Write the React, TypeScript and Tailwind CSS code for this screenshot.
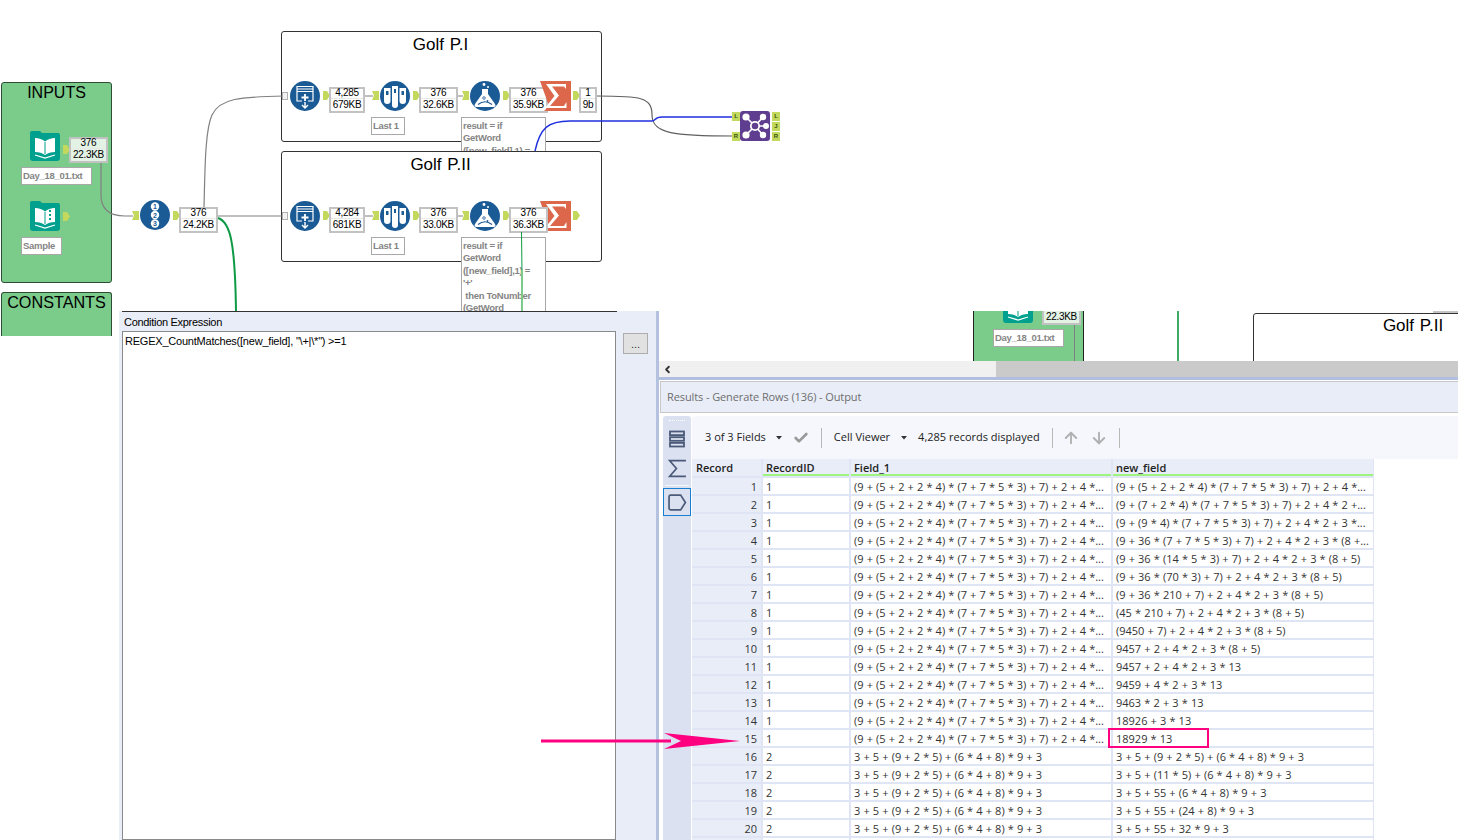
import React from 'react';
import { ArrowDown, ArrowUp, Check, ChevronLeft } from 'lucide-react';

const canvasFont = "font-['Liberation_Sans',Arial,sans-serif]";
const uiFont = "font-['Open_Sans','Noto_Sans',sans-serif]";

const FULL_1 = '(9 + (5 + 2 + 2 * 4) * (7 + 7 * 5 * 3) + 7) + 2 + 4 *...';
const FULL_2 = '3 + 5 + (9 + 2 * 5) + (6 * 4 + 8) * 9 + 3';

const rows = [
  { id: 1, f: FULL_1, n: FULL_1 },
  { id: 1, f: FULL_1, n: '(9 + (7 + 2 * 4) * (7 + 7 * 5 * 3) + 7) + 2 + 4 * 2 +...' },
  { id: 1, f: FULL_1, n: '(9 + (9 * 4) * (7 + 7 * 5 * 3) + 7) + 2 + 4 * 2 + 3 *...' },
  { id: 1, f: FULL_1, n: '(9 + 36 * (7 + 7 * 5 * 3) + 7) + 2 + 4 * 2 + 3 * (8 +...' },
  { id: 1, f: FULL_1, n: '(9 + 36 * (14 * 5 * 3) + 7) + 2 + 4 * 2 + 3 * (8 + 5)' },
  { id: 1, f: FULL_1, n: '(9 + 36 * (70 * 3) + 7) + 2 + 4 * 2 + 3 * (8 + 5)' },
  { id: 1, f: FULL_1, n: '(9 + 36 * 210 + 7) + 2 + 4 * 2 + 3 * (8 + 5)' },
  { id: 1, f: FULL_1, n: '(45 * 210 + 7) + 2 + 4 * 2 + 3 * (8 + 5)' },
  { id: 1, f: FULL_1, n: '(9450 + 7) + 2 + 4 * 2 + 3 * (8 + 5)' },
  { id: 1, f: FULL_1, n: '9457 + 2 + 4 * 2 + 3 * (8 + 5)' },
  { id: 1, f: FULL_1, n: '9457 + 2 + 4 * 2 + 3 * 13' },
  { id: 1, f: FULL_1, n: '9459 + 4 * 2 + 3 * 13' },
  { id: 1, f: FULL_1, n: '9463 * 2 + 3 * 13' },
  { id: 1, f: FULL_1, n: '18926 + 3 * 13' },
  { id: 1, f: FULL_1, n: '18929 * 13' },
  { id: 2, f: FULL_2, n: FULL_2 },
  { id: 2, f: FULL_2, n: '3 + 5 + (11 * 5) + (6 * 4 + 8) * 9 + 3' },
  { id: 2, f: FULL_2, n: '3 + 5 + 55 + (6 * 4 + 8) * 9 + 3' },
  { id: 2, f: FULL_2, n: '3 + 5 + 55 + (24 + 8) * 9 + 3' },
  { id: 2, f: FULL_2, n: '3 + 5 + 55 + 32 * 9 + 3' },
];

const OutAnchor = ({ className }: { className: string }) => (
  <svg viewBox="0 0 7 9" className={`absolute w-[7px] h-[9px] ${className}`}>
    <polygon points="0,0 4,0 7,4.5 4,9 0,9" fill="#c3d95e" />
  </svg>
);

const InAnchor = ({ className }: { className: string }) => (
  <svg viewBox="0 0 7 9" className={`absolute w-[7px] h-[9px] ${className}`}>
    <polygon points="0,0 7,0 7,9 0,9 2,4.5" fill="#c3d95e" />
  </svg>
);

const Stat = ({ className, top, bottom }: { className: string; top: string; bottom: string }) => (
  <div className={`absolute h-[26px] border-2 border-[#c2c2c2] flex flex-col items-center justify-center pb-[3px] text-[10px] text-black tracking-[-0.3px] ${className}`}>
    <span className="w-full text-center leading-[11px] border-b border-[#e8e8e8]">{top}</span>
    <span className="leading-[12px]">{bottom}</span>
  </div>
);

const Note = ({ className, children }: { className: string; children: React.ReactNode }) => (
  <div className={`absolute bg-white border border-[#a8a8a8] pl-[1px] font-bold text-[9.5px] leading-[12.4px] tracking-[-0.3px] text-[#858585] overflow-hidden ${className}`}>
    {children}
  </div>
);

const Book = ({ className, dots }: { className: string; dots?: boolean }) => (
  <svg viewBox="0 0 30 30" className={`absolute w-[30px] h-[30px] ${className}`}>
    <path d="M0 2 Q0 0 2 0 H10 L12 2 H28 Q30 2 30 4 V27 Q30 30 27 30 H3 Q0 30 0 27 Z" fill="#00a08e" />
    <path d="M5 7 Q11 7 15 10.5 Q19 7 25 7 V21 Q19 21 15 24 Q11 21 5 21 Z" fill="#fff" />
    <path d="M15 11 V23" stroke="#00a08e" strokeWidth="1" />
    <path d="M5 24 L15 27 L25 24" stroke="#fff" strokeWidth="1.2" fill="none" />
    {dots && (
      <g fill="#00a08e">
        <rect x="19" y="9" width="2" height="2" />
        <rect x="19" y="13" width="2" height="2" />
        <rect x="19" y="17" width="2" height="2" />
      </g>
    )}
  </svg>
);

const Circle = ({ className, children }: { className: string; children: React.ReactNode }) => (
  <svg viewBox="0 0 30 30" className={`absolute w-[30px] h-[30px] ${className}`}>
    <circle cx="15" cy="15" r="15" fill="#1a5b96" />
    {children}
  </svg>
);

const AppendIcon = () => (
  <g fill="none" stroke="#fff">
    <path d="M7 5.5 H23 M7 8 H23 M7 10.5 H23" strokeWidth="1.2" />
    <path d="M7 5 V20 H12 M23 5 V20 H18" strokeWidth="1.2" />
    <path d="M15 13 V20 M11.5 16.5 H18.5" strokeWidth="1.8" />
    <path d="M15 21 V27 M12 24 L15 27 L18 24" strokeWidth="1.4" />
  </g>
);

const TubesIcon = () => (
  <g>
    <path d="M4 7 H10.5 V20 Q10.5 23 7.25 23 Q4 23 4 20 Z" fill="#fff" />
    <path d="M12 5 H18 V24 Q18 27 15 27 Q12 27 12 24 Z" fill="#fff" />
    <path d="M19.5 7 H26 V20 Q26 23 22.75 23 Q19.5 23 19.5 20 Z" fill="#fff" />
    <path d="M6 10 H8.5 V14 H6 Z M14 8 H16 V12 H14 Z M21.5 10 H24 V14 H21.5 Z" fill="#1a5b96" />
  </g>
);

const FlaskIcon = () => (
  <g>
    <circle cx="14" cy="3.5" r="1.4" fill="#fff" />
    <circle cx="18" cy="6" r="1" fill="#fff" />
    <path d="M12 8 H18 V13 L25 23 Q26.5 26 23.5 26 H6.5 Q3.5 26 5 23 L12 13 Z" fill="#fff" />
    <path d="M8 23.5 Q15 18 22 23.5" stroke="#1a5b96" strokeWidth="1.2" fill="none" />
    <circle cx="14" cy="17" r="1.3" fill="none" stroke="#1a5b96" strokeWidth="0.8" />
    <circle cx="17.5" cy="20" r="0.9" fill="#1a5b96" />
  </g>
);

const SortIcon = () => (
  <g>
    {[
      { y: 6.5, t: '1' },
      { y: 15, t: '2' },
      { y: 23.5, t: '3' },
    ].map((d) => (
      <g key={d.t}>
        <circle cx="15" cy={d.y} r="4.2" fill="#fff" />
        <text x="15" y={d.y + 2.6} textAnchor="middle" fontSize="7" fontWeight="700" fill="#1a5b96" fontFamily="Liberation Sans, sans-serif">
          {d.t}
        </text>
      </g>
    ))}
  </g>
);

const Sigma = ({ className }: { className: string }) => (
  <svg viewBox="0 0 31 30" className={`absolute w-[31px] h-[30px] ${className}`}>
    <path d="M0 0 H31 V30 H4 L9 25 Z" fill="#dc674b" />
    <path d="M6 3 H26 V8 L24 5.5 H12 L19 14.5 L10 25 H24 L26.5 21 V27 H5 L14.5 15 Z" fill="#fff" />
  </svg>
);

const JoinIcon = ({ className }: { className: string }) => (
  <svg viewBox="0 0 30 30" className={`absolute w-[30px] h-[30px] ${className}`}>
    <rect width="30" height="30" rx="3" fill="#5f3d8f" />
    <g stroke="#fff" strokeWidth="1.6">
      <path d="M15 15 L6 6 M15 15 L23 6 M15 15 L6 24 M15 15 L23 24 M15 15 L26 15" />
    </g>
    <circle cx="15" cy="15" r="4.2" fill="#5f3d8f" stroke="#fff" strokeWidth="1.8" />
    <g fill="#fff">
      <circle cx="6" cy="6" r="3.6" />
      <circle cx="23" cy="6" r="3.2" />
      <circle cx="6" cy="24" r="3.6" />
      <circle cx="23" cy="24" r="3.2" />
      <circle cx="26" cy="15" r="3" />
    </g>
  </svg>
);

const JoinPort = ({ className, label }: { className: string; label: string }) => (
  <div className={`absolute w-[8px] h-[9px] bg-[#c3d95e] text-[6px] leading-[9px] font-bold text-center text-[#35520f] ${className}`}>
    {label}
  </div>
);

const MacroIn = ({ className }: { className: string }) => (
  <div className={`absolute w-[6px] h-[8px] border border-[#b0b0b0] bg-[#f2f2f2] ${className}`} />
);

const Container = ({ className, title }: { className: string; title: string }) => (
  <div className={`absolute h-[111px] bg-white border border-[#333] rounded-[3px] text-center text-[17px] leading-[26px] pr-[2px] [word-spacing:1px] ${className}`}>
    {title}
  </div>
);

const Workflow = () => (
  <div className={`relative h-[311px] ${canvasFont}`}>
    <div className="absolute left-[1px] top-[82px] w-[111px] h-[201px] bg-[#7bcb8b] border border-[#2d4d36] rounded-[3px] text-center text-[16px] leading-[19px]">
      INPUTS
    </div>
    <div className="absolute left-[1px] top-[292px] w-[111px] h-[44px] bg-[#7bcb8b] border border-b-0 border-[#2d4d36] rounded-t-[3px] text-center text-[16.2px] leading-[19px]">
      CONSTANTS
    </div>

    <Container className="left-[281px] top-[31px] w-[321px]" title="Golf P.I" />
    <Note className="left-[461px] top-[117px] w-[85px] h-[36px] border-b-0 pt-[2px]">
      result = if
      <br />
      GetWord
      <br />
      ([new_field],1) =
    </Note>
    <Container className="left-[281px] top-[151px] w-[321px]" title="Golf P.II" />

    {/* connections */}
    <svg viewBox="0 0 800 311" className="absolute left-0 top-0 w-[800px] h-[311px]" fill="none">
      <path d="M101 160 V195 Q101 216 125 216 H133" stroke="#808080" strokeWidth="1.2" />
      <path d="M204 207 C205 170 205 130 212 115 C220 98 240 97 284 96" stroke="#808080" strokeWidth="1.2" />
      <path d="M217 216 H284" stroke="#808080" strokeWidth="1.2" />
      <path d="M365 96 H373 M458 96 H463 M365 216 H373 M458 216 H463" stroke="#808080" strokeWidth="1.2" />
      <path d="M597 96 C640 96 652 97 652 115 C652 134 675 136 733 136" stroke="#606060" strokeWidth="1.2" />
      <path d="M535 151 C540 128 548 121 570 121 H652 C656 121 654 117 662 117 H734" stroke="#2030e0" strokeWidth="1.4" />
      <path d="M218 218 C230 222 235 240 236 311" stroke="#0d9a45" strokeWidth="2" />
      <path d="M510 217 C518 216 521 222 521 232" stroke="#9ed8ae" strokeWidth="1" />
    </svg>

    <Book className="left-[30px] top-[131px]" />
    <OutAnchor className="left-[63px] top-[145px]" />
    <Stat className="left-[69px] top-[137px] w-[39px] bg-[#e2f3e6]" top="376" bottom="22.3KB" />
    <Note className="left-[21px] top-[167px] w-[71px] h-[18px] leading-[16px]">Day_18_01.txt</Note>
    <Book className="left-[30px] top-[201px]" dots />
    <OutAnchor className="left-[63px] top-[212px]" />
    <Note className="left-[21px] top-[237px] w-[41px] h-[18px] leading-[16px]">Sample</Note>

    <InAnchor className="left-[132px] top-[211px]" />
    <Circle className="left-[140px] top-[200px]">
      <SortIcon />
    </Circle>
    <OutAnchor className="left-[173px] top-[211px]" />
    <Stat className="left-[179px] top-[207px] w-[39px] bg-white" top="376" bottom="24.2KB" />

    {/* Golf P.I */}
    <MacroIn className="left-[282px] top-[92px]" />
    <Circle className="left-[290px] top-[81px]">
      <AppendIcon />
    </Circle>
    <OutAnchor className="left-[323px] top-[91px]" />
    <Stat className="left-[329px] top-[87px] w-[36px] bg-white" top="4,285" bottom="679KB" />
    <InAnchor className="left-[372px] top-[91px]" />
    <Circle className="left-[380px] top-[81px]">
      <TubesIcon />
    </Circle>
    <OutAnchor className="left-[413px] top-[91px]" />
    <Stat className="left-[419px] top-[87px] w-[39px] bg-white" top="376" bottom="32.6KB" />
    <InAnchor className="left-[462px] top-[91px]" />
    <Circle className="left-[470px] top-[81px]">
      <FlaskIcon />
    </Circle>
    <OutAnchor className="left-[503px] top-[91px]" />
    <Stat className="left-[509px] top-[87px] w-[39px] bg-white" top="376" bottom="35.9KB" />
    <Sigma className="left-[540px] top-[81px]" />
    <OutAnchor className="left-[573px] top-[91px]" />
    <Stat className="left-[579px] top-[87px] w-[18px] bg-white" top="1" bottom="9b" />
    <Note className="left-[371px] top-[117px] w-[34px] h-[18px] leading-[16px]">Last 1</Note>

    {/* Golf P.II */}
    <MacroIn className="left-[282px] top-[212px]" />
    <Circle className="left-[290px] top-[201px]">
      <AppendIcon />
    </Circle>
    <OutAnchor className="left-[323px] top-[211px]" />
    <Stat className="left-[329px] top-[207px] w-[36px] bg-white" top="4,284" bottom="681KB" />
    <InAnchor className="left-[372px] top-[211px]" />
    <Circle className="left-[380px] top-[201px]">
      <TubesIcon />
    </Circle>
    <OutAnchor className="left-[413px] top-[211px]" />
    <Stat className="left-[419px] top-[207px] w-[39px] bg-white" top="376" bottom="33.0KB" />
    <InAnchor className="left-[462px] top-[211px]" />
    <Circle className="left-[470px] top-[201px]">
      <FlaskIcon />
    </Circle>
    <OutAnchor className="left-[503px] top-[211px]" />
    <Sigma className="left-[540px] top-[201px]" />
    <Stat className="left-[509px] top-[207px] w-[39px] bg-white" top="376" bottom="36.3KB" />
    <OutAnchor className="left-[573px] top-[211px]" />
    <Note className="left-[371px] top-[237px] w-[34px] h-[18px] leading-[16px]">Last 1</Note>
    <Note className="left-[461px] top-[237px] w-[85px] h-[74px] border-b-0 pt-[2px]">
      result = if
      <br />
      GetWord
      <br />
      ([new_field],1) =
      <br />
      '+'
      <br />
      &nbsp;then ToNumber
      <br />
      (GetWord
    </Note>
    <svg viewBox="0 0 2 79" className="absolute left-[521px] top-[232px] w-[2px] h-[79px]" fill="none">
      <path d="M0.5 0 L1 40" stroke="#0d9a45" strokeWidth="1" />
      <path d="M1 38 V79" stroke="#7bcb8b" strokeWidth="2" />
    </svg>

    {/* Join */}
    <JoinPort className="left-[732px] top-[112px]" label="L" />
    <JoinPort className="left-[732px] top-[132px]" label="R" />
    <JoinIcon className="left-[740px] top-[111px]" />
    <JoinPort className="left-[772px] top-[112px]" label="L" />
    <JoinPort className="left-[772px] top-[122px]" label="J" />
    <JoinPort className="left-[772px] top-[132px]" label="R" />
  </div>
);

const ConditionPanel = () => (
  <div className={`w-[537px] h-full bg-[#e9edf8] pl-[3px] flex flex-col text-black ${canvasFont}`}>
    <div className="w-[495px] h-[20px] border-t border-[#333] text-[11px] leading-[20px] pl-[2px] tracking-[-0.3px]">
      Condition Expression
    </div>
    <div className="flex flex-1 min-h-0">
      <div className="w-[494px] h-full bg-white border border-[#8a8a8a] pl-[2px] text-[11px] leading-[18px] tracking-[-0.22px]">
        {'REGEX_CountMatches([new_field], "\\+|\\*") >=1'}
      </div>
      <div className="ml-[7px] mt-[2px] w-[25px] h-[21px] bg-[#e1e1e1] border border-[#adadad] text-center text-[11px] leading-[20px] text-[#333]">
        ...
      </div>
    </div>
  </div>
);

const MiniCanvas = () => (
  <div className={`relative h-[50px] overflow-hidden ${canvasFont}`}>
    <div className="absolute left-[314px] top-[-20px] w-[111px] h-[100px] bg-[#7bcb8b] border-x border-[#222]" />
    <Book className="left-[344px] top-[-18px]" />
    <Stat className="left-[383px] top-[-12px] w-[39px] bg-[#e2f3e6]" top="376" bottom="22.3KB" />
    <Note className="left-[334px] top-[18px] w-[71px] h-[18px] leading-[16px]">Day_18_01.txt</Note>
    <div className="absolute left-[415px] top-[14px] w-px h-[36px] bg-[#808080]" />
    <div className="absolute left-[518px] top-0 w-[2px] h-[50px] bg-[#3eaa66]" />
    <div className="absolute left-[774px] top-0 w-[25px] h-[2px] bg-[#c4c4c4]" />
    <div className="absolute left-[594px] top-[2px] w-[210px] h-[60px] bg-white border border-[#333] rounded-t-[3px] text-center text-[17px] leading-[24px] [word-spacing:1px] pl-[110px]">
      Golf P.II
    </div>
  </div>
);

const RailIcons = () => (
  <div className="w-[28px] h-full bg-[#dbe1f0] rounded-t-[3px] flex flex-col items-center">
    <div className="mt-[4px] w-[16px] border-t border-dotted border-white" />
    <svg viewBox="0 0 18 18" className="mt-[9px] w-[18px] h-[18px]" fill="none" stroke="#4a5a78" strokeWidth="1.8">
      <rect x="2" y="1.5" width="14" height="3.6" />
      <rect x="2" y="7.2" width="14" height="3.6" />
      <rect x="2" y="12.9" width="14" height="3.6" />
    </svg>
    <svg viewBox="0 0 18 18" className="mt-[11px] w-[19px] h-[19px]" fill="none" stroke="#4a5a78" strokeWidth="1.6">
      <path d="M17 1.5 H1.5 L8 9 L1.5 16.5 H17" />
    </svg>
    <div className="mt-[7px] w-[24px] border-t border-[#f5f7fc]" />
    <div className="mt-[2px] w-[28px] h-[28px] border border-[#1a7fd0] flex items-center justify-center">
      <svg viewBox="0 0 18 18" className="w-[19px] h-[19px]" fill="none" stroke="#4a5a78" strokeWidth="1.6">
        <path d="M2.5 2 H12 L16.5 9 L12 16 H2.5 Q1 16 1 14.5 V3.5 Q1 2 2.5 2 Z" />
      </svg>
    </div>
  </div>
);

const Caret = ({ className }: { className: string }) => (
  <svg viewBox="0 0 6 4" className={`w-[6px] h-[4px] ${className}`}>
    <polygon points="0,0 6,0 3,3.5" fill="#333" />
  </svg>
);

const Toolbar = () => (
  <div className="h-[43px] bg-[#f5f7fc] rounded-tl-[4px] flex items-center text-[11px] text-[#222]">
    <span className="ml-[13px]">3 of 3 Fields</span>
    <Caret className="ml-[10px]" />
    <Check className="ml-[11px] w-[16px] h-[16px] text-[#999]" strokeWidth={4} />
    <div className="ml-[12px] w-px h-[20px] bg-[#b8b8b8]" />
    <span className="ml-[12px]">Cell Viewer</span>
    <Caret className="ml-[11px]" />
    <span className="ml-[11px]">4,285 records displayed</span>
    <div className="ml-[12px] w-px h-[20px] bg-[#b8b8b8]" />
    <ArrowUp className="ml-[9px] w-[18px] h-[18px] text-[#b0b0b0]" strokeWidth={2.5} />
    <ArrowDown className="ml-[10px] w-[18px] h-[18px] text-[#b0b0b0]" strokeWidth={2.5} />
    <div className="ml-[11px] w-px h-[20px] bg-[#b8b8b8]" />
  </div>
);

const headCell = 'bg-[#e9edf8] h-[17px] leading-[17px] pl-[3px] font-semibold text-[11px] text-[#222]';
const headField = `${headCell} border-b-2 border-[#9df57f]`;
const bodyCell = 'bg-white h-[16px] leading-[18px] pl-[3px] text-[11px] text-[#333] whitespace-nowrap overflow-hidden [word-spacing:0.27px]';

const ResultsGrid = () => (
  <div className="w-[682px] flex-1 min-h-0 overflow-hidden bg-[#dfe5f4] grid grid-cols-[69px_86px_260px_260px] auto-rows-min gap-[2px] pr-px">
    <div className={`${headCell} pl-[4px]`}>Record</div>
    <div className={headField}>RecordID</div>
    <div className={headField}>Field_1</div>
    <div className={headField}>new_field</div>
    {rows.map((r, i) => (
      <React.Fragment key={i}>
        <div className="bg-[#e9edf8] h-[16px] leading-[18px] text-right pr-[4px] text-[11px] text-[#333]">{i + 1}</div>
        <div className={bodyCell}>{r.id}</div>
        <div className={bodyCell}>{r.f}</div>
        <div className={bodyCell}>{r.n}</div>
      </React.Fragment>
    ))}
    <div className="bg-[#e9edf8] h-[16px]" />
    <div className="bg-white h-[16px]" />
    <div className="bg-white h-[16px]" />
    <div className="bg-white h-[16px]" />
  </div>
);

const ResultsPanel = () => (
  <div className={`w-[799px] h-full flex flex-col ${uiFont}`}>
    <MiniCanvas />
    <div className="h-[16px] flex bg-[#f0f0f0] items-center shrink-0">
      <div className="w-[337px] pl-[3px]">
        <ChevronLeft className="w-[11px] h-[11px] text-[#333]" strokeWidth={4} />
      </div>
      <div className="flex-1 h-full bg-[#cacaca]" />
    </div>
    <div className="h-[3px] bg-[#b0bfdf] shrink-0" />
    <div className="ml-px mt-px h-[32px] shrink-0 bg-[#e9edf8] border border-r-0 border-[#c8c8c8] flex items-center pl-[6px] text-[11px] tracking-[-0.1px] text-[#6d6d6d]">
      Results - Generate Rows (136) - Output
    </div>
    <div className="flex flex-1 min-h-0 pt-[3px]">
      <div className="ml-[4px] w-[28px] h-full">
        <RailIcons />
      </div>
      <div className="ml-px flex-1 flex flex-col min-w-0">
        <Toolbar />
        <ResultsGrid />
      </div>
    </div>
  </div>
);

export default function App() {
  return (
    <div className="relative w-[1481px] h-[840px] overflow-hidden bg-white text-black">
      <Workflow />
      <div className="ml-[119px] h-[529px] flex">
        <ConditionPanel />
        <div className="w-[3px] h-full bg-[#b4c2e0]" />
        <ResultsPanel />
      </div>

      {/* annotations drawn over the screenshot */}
      <svg viewBox="0 0 200 16" className="absolute left-[541px] top-[733px] w-[200px] h-[16px]">
        <rect x="0" y="6.5" width="130" height="3" fill="#ff0080" />
        <polygon points="123,0 199,8 123,16 140,8" fill="#ff0080" />
      </svg>
      <div className="absolute left-[1108px] top-[728px] w-[101px] h-[20px] border-2 border-[#ff0080]" />
    </div>
  );
}
